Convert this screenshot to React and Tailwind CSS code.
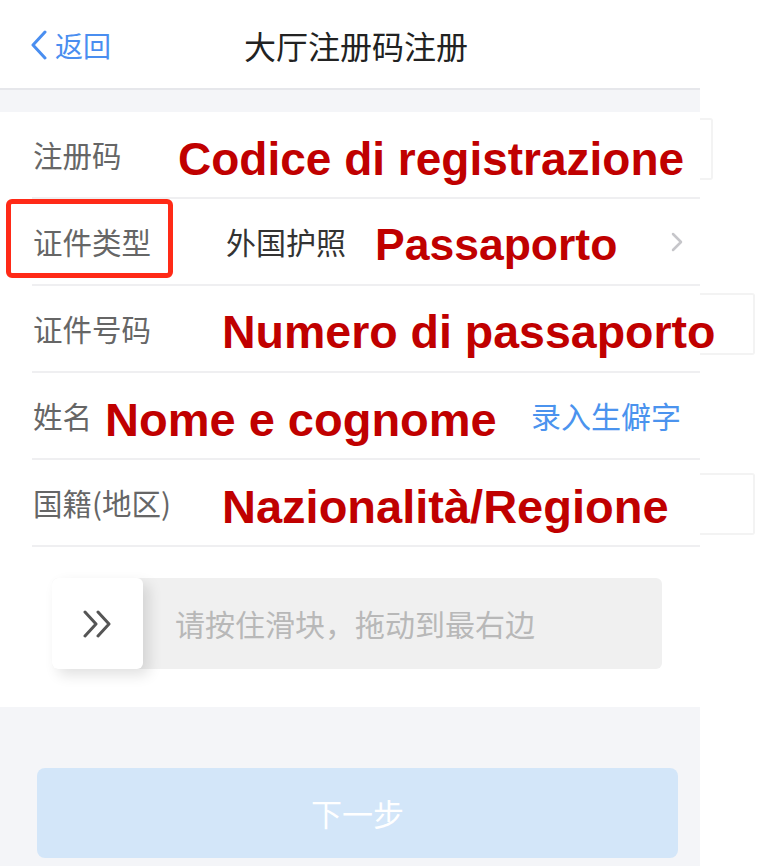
const cjk = "font-['Noto_Sans_CJK_SC','Noto_Sans',sans-serif]";
const red = "font-['Liberation_Sans',Arial,sans-serif] font-bold leading-none pt-[8px] text-[#c00000] whitespace-nowrap";

// one form row, the divider runs under it
const Row = ({ children, className = "" }) => (
  <div className={`relative flex items-center h-[87px] ml-[32px] w-[668px] border-b-2 border-[#efeff1] ${className}`}>
    {children}
  </div>
);

const Label = ({ children, w }) => (
  <span className={`${cjk} text-[29.5px] text-[#666] pl-px shrink-0 ${w}`}>{children}</span>
);

export default function App() {
  return (
    <div className="relative w-[768px] h-[866px] bg-white overflow-hidden">
      <div className="w-[700px] h-full flex flex-col">
        {/* header */}
        <div className="h-[88px] flex items-center pl-[30px] pt-[2px] bg-white">
          <button className="flex items-center text-[#4a8ef0]">
            <svg width="18" height="30" viewBox="0 0 18 30" fill="none">
              <path d="M15 2 L3 15 L15 28" stroke="currentColor" strokeWidth="3" strokeLinecap="round" strokeLinejoin="round" />
            </svg>
            <span className={`${cjk} text-[28px] ml-[7px] leading-none`}>返回</span>
          </button>
          <h1 className={`${cjk} text-[32px] text-[#222] ml-[133px] leading-none`}>大厅注册码注册</h1>
        </div>
        <div className="h-[24px] bg-[#f4f5f8] border-t-2 border-[#e6e7eb]" />

        {/* form */}
        <div className="bg-white">
          <Row>
            <Label w="w-[146px]">注册码</Label>
            <span className={`${red} text-[46px]`}>Codice di registrazione</span>
          </Row>
          <Row>
            <Label w="w-[194px]">证件类型</Label>
            <span className={`${cjk} text-[30px] text-[#333] shrink-0`}>外国护照</span>
            <span className={`${red} text-[44.5px] ml-[29px]`}>Passaporto</span>
            <svg className="ml-auto mr-[15px]" width="16" height="22" viewBox="0 0 16 22" fill="none">
              <path d="M4 3 L12 11 L4 19" stroke="#c6c6ca" strokeWidth="2.5" strokeLinecap="round" strokeLinejoin="round" />
            </svg>
            {/* annotation frame */}
            <div className="absolute left-[-26px] top-[0px] w-[167px] h-[79px] border-[5px] border-[#ff2a17] rounded-[6px]" />
          </Row>
          <Row>
            <Label w="w-[190px]">证件号码</Label>
            <span className={`${red} text-[46.5px]`}>Numero di passaporto</span>
          </Row>
          <Row>
            <Label w="w-[73px]">姓名</Label>
            <span className={`${red} text-[47px]`}>Nome e cognome</span>
            <span className={`${cjk} text-[30px] text-[#4b93ee] ml-auto mr-[19px]`}>录入生僻字</span>
          </Row>
          <Row>
            <Label w="w-[190px]">国籍(地区)</Label>
            <span className={`${red} text-[47px]`}>Nazionalità/Regione</span>
          </Row>
        </div>

        {/* slider */}
        <div className="bg-white pt-[31px] pb-[38px]">
          <div className="ml-[52px] w-[610px] h-[91px] bg-[#f0f0f0] rounded-[6px] flex items-center">
            <div className="w-[91px] h-full bg-white rounded-[6px] shadow-[6px_6px_14px_rgba(0,0,0,0.12)] flex items-center justify-center">
              <svg width="32" height="28" viewBox="0 0 32 28" fill="none">
                <path d="M3 2 L14 14 L3 26 M16 2 L27 14 L16 26" stroke="#555" strokeWidth="3" strokeLinecap="round" strokeLinejoin="round" />
              </svg>
            </div>
            <span className={`${cjk} text-[30px] text-[#b8b8b8] ml-[32px]`}>请按住滑块，拖动到最右边</span>
          </div>
        </div>

        {/* footer */}
        <div className="flex-1 bg-[#f4f5f8] pt-[61px]">
          <button className={`${cjk} ml-[37px] w-[641px] h-[90px] rounded-[8px] bg-[#d3e6f9] text-white text-[31px]`}>下一步</button>
        </div>
      </div>

      {/* leftovers of the annotation boxes past the screen edge */}
      <div className="absolute left-[700px] top-[118px] w-[13px] h-[62px] border-y-2 border-r-2 border-[#f3f3f3] rounded-r-[3px]" />
      <div className="absolute left-[700px] top-[293px] w-[55px] h-[62px] border-y-2 border-r-2 border-[#f3f3f3] rounded-r-[3px]" />
      <div className="absolute left-[700px] top-[473px] w-[55px] h-[62px] border-y-2 border-r-2 border-[#f3f3f3] rounded-r-[3px]" />
    </div>
  );
}
